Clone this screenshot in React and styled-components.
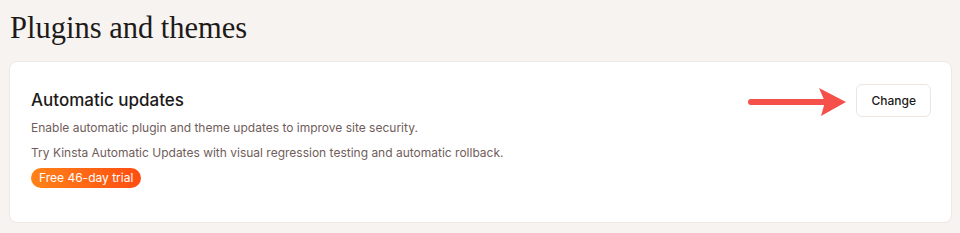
import React from "react";
import styled, {createGlobalStyle} from "styled-components";

const GlobalStyle = createGlobalStyle`
  html, body {
    margin: 0;
    padding: 0;
    background-color: #f7f3f0;
  }
  body {
    font-family: Inter, "Noto Sans", sans-serif;
    -webkit-font-smoothing: antialiased;
  }
`;

const Page = styled.div`
  width: 960px;
  height: 233px;
  box-sizing: border-box;
  padding: 9px 8px 0 9px;
  overflow: hidden;
`;

const PageTitle = styled.h1`
  margin: 0 0 14px 1px;
  font-family: "Liberation Serif", "DejaVu Serif", serif;
  font-weight: 400;
  font-size: 30.5px;
  line-height: 38px;
  color: #1d1a19;
`;

const Card = styled.section`
  display: flex;
  justify-content: space-between;
  align-items: flex-start;
  box-sizing: border-box;
  height: 162px;
  padding: 21px 20px 0 21px;
  background-color: #ffffff;
  border: 1px solid #efe7e2;
  border-radius: 8px;
`;

const Content = styled.div`
  display: flex;
  flex-direction: column;
  align-items: flex-start;
`;

const CardTitle = styled.h2`
  margin: 0 0 1px;
  font-size: 17px;
  line-height: 34px;
  font-weight: 500;
  color: #1d1a19;
`;

const Text = styled.p`
  margin: 0 0 5px;
  font-size: 12px;
  line-height: 20px;
  color: #705d5b;
`;

const Badge = styled.span`
  padding: 0 8px;
  height: 20px;
  line-height: 20px;
  border-radius: 10px;
  font-size: 12px;
  color: #ffffff;
  background: linear-gradient(90deg, #ff8218 0%, #ff4d12 100%);
`;

const Actions = styled.div`
  display: flex;
  align-items: center;
  gap: 8px;
`;

const Arrow = styled.svg`
  display: block;
  width: 102px;
  height: 30px;
  margin-top: 4px;
`;

const Button = styled.button`
  height: 33px;
  padding: 0 14px;
  background: #ffffff;
  border: 1px solid #ede5e0;
  border-radius: 6px;
  font-family: Inter, "Noto Sans", sans-serif;
  font-size: 12px;
  font-weight: 500;
  color: #1d1a19;
  cursor: pointer;
`;

const App = () => (
  <>
    <GlobalStyle/>
    <Page>
      <PageTitle>Plugins and themes</PageTitle>
      <Card>
        <Content>
          <CardTitle>Automatic updates</CardTitle>
          <Text>Enable automatic plugin and theme updates to improve site security.</Text>
          <Text>Try Kinsta Automatic Updates with visual regression testing and automatic rollback.</Text>
          <Badge>Free 46-day trial</Badge>
        </Content>
        <Actions>
          <Arrow viewBox="0 0 102 30">
            <line x1="5" y1="15" x2="80" y2="15" stroke="#f5504a" strokeWidth="6" strokeLinecap="round"/>
            <polygon points="73,1 100,15 75,29 79,15" fill="#f5504a"/>
          </Arrow>
          <Button>Change</Button>
        </Actions>
      </Card>
    </Page>
  </>
);

export default App;
